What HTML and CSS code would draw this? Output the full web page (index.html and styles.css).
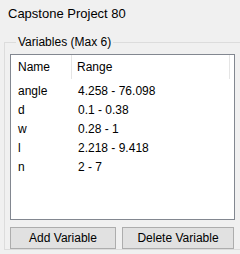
FILE: index.html
```html
<!DOCTYPE html>
<html lang="en">

    <head>
        <meta charset="UTF-8">
        <title>Capstone Project 80</title>
        <link rel="stylesheet" href="styles.css">
    </head>

    <body>
        <div class="title">Capstone Project 80</div>

        <fieldset class="group">
            <legend>Variables (Max 6)</legend>

            <div class="list-view">
                <div class="list-header">
                    <div class="col col-name">Name</div>
                    <div class="col col-range">Range</div>
                </div>
                <ul class="list-rows">
                    <li><span class="col-name">angle</span><span>4.258 - 76.098</span></li>
                    <li><span class="col-name">d</span><span>0.1 - 0.38</span></li>
                    <li><span class="col-name">w</span><span>0.28 - 1</span></li>
                    <li><span class="col-name">l</span><span>2.218 - 9.418</span></li>
                    <li><span class="col-name">n</span><span>2 - 7</span></li>
                </ul>
            </div>

            <div class="buttons">
                <button class="btn btn-add">Add Variable</button>
                <button class="btn btn-delete">Delete Variable</button>
            </div>
        </fieldset>
    </body>

</html>
```

FILE: styles.css
```css
* {
    margin: 0;
    padding: 0;
    box-sizing: border-box;
}

body {
    font-family: 'Liberation Sans', Arial, sans-serif;
    font-size: 12px;
    color: #000;
    background-color: #f0f0f0;
    width: 240px;
    height: 254px;
    overflow: hidden;
}

.title {
    font-size: 13px;
    line-height: 16px;
    height: 35px;
    padding: 6px 0 0 8px;
}

.group {
    margin: 0 0 0 4px;
    padding: 5px 0 0 5px;
    border: 1px solid #dcdcdc;
    border-right: none;
    min-width: 0;
}

.group legend {
    margin-left: 6px;
    padding: 0 2px;
    line-height: 14px;
}

.list-view {
    width: 225px;
    height: 166px;
    background-color: #fff;
    border: 1px solid #828790;
}

.list-header {
    display: flex;
    height: 24px;
    line-height: 24px;
}

.col {
    border-right: 1px solid #e5e5e5;
}

.col-name {
    width: 61px;
    padding-left: 7px;
}

.col-range {
    width: 158px;
    padding-left: 5px;
}

.list-rows {
    list-style-type: none;
    padding-top: 3px;
}

.list-rows li {
    display: flex;
    height: 19px;
    line-height: 19px;
}

.list-rows .col-name {
    width: 67px;
}

.buttons {
    display: flex;
    gap: 6px;
    margin-top: 7px;
}

.btn {
    font-family: inherit;
    font-size: 12px;
    color: #000;
    height: 22px;
    background-color: #e1e1e1;
    border: 1px solid #adadad;
}

.btn-add {
    width: 106px;
}

.btn-delete {
    width: 112px;
}
```
